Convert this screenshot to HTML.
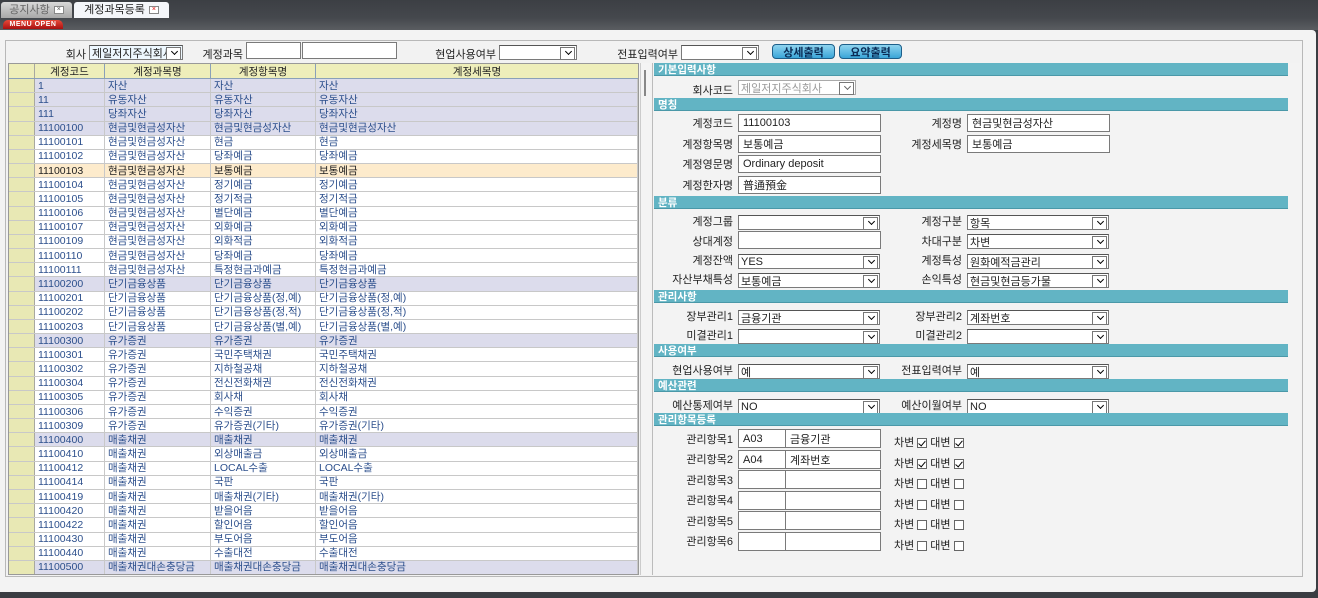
<!DOCTYPE html>
<html><head><meta charset="utf-8">
<style>
*{box-sizing:border-box;margin:0;padding:0}
body{width:1318px;height:598px;overflow:hidden;background:#3a3d42;font-family:"Liberation Sans","Noto Sans CJK KR","NanumGothic",sans-serif;font-size:11px;color:#222;position:relative}
.a{position:absolute}
.top{left:0;top:0;width:1318px;height:30px;background:linear-gradient(#3c3f44,#45484d 60%,#5a5d61)}
.tab{top:2px;height:16px;border-radius:3px 3px 0 0;font-size:11px;line-height:16px;text-align:center}
.x{display:inline-block;width:10px;height:8px;border:1px solid #888;background:#fff;font-size:7px;line-height:6px;vertical-align:middle;margin-left:4px;color:#555}
.menu{left:3px;top:20px;width:60px;height:9px;background:linear-gradient(#e84a3a,#a81010);border-radius:5px 5px 0 0;color:#fff;font-size:7px;font-weight:bold;line-height:9px;text-align:center;letter-spacing:.5px}
.main{left:0;top:30px;width:1316px;height:562px;background:#f3f3f3;border-radius:0 4px 4px 0}
.box{left:5px;top:40px;width:1298px;height:537px;border:1px solid #b8b8b8;background:#f2f2f2}
.inp{background:#fff;border:1px solid #7a7a7a;height:16px;font-size:11px;padding-left:4px;overflow:hidden;white-space:nowrap;display:flex;align-items:center}
.sel{background:#fff;border:1px solid #7a7a7a;border-top-color:#555;height:15px;font-size:11px;padding-left:2px;white-space:nowrap;display:flex;align-items:center}
.sel:after{content:"";position:absolute;right:1px;top:1px;width:13px;height:11px;border:1px solid #777;background:#fff}
.sel i{position:absolute;right:5px;top:3px;width:5px;height:5px;border-right:1.5px solid #000;border-bottom:1.5px solid #000;transform:rotate(45deg);z-index:2}
.lbl{font-size:11px;text-align:right;white-space:nowrap;color:#222}
.grid{left:8px;top:63px;width:631px;height:512px;border:1px solid #999;background:#fff;overflow:hidden}
.hd{position:absolute;left:0;top:0;height:15px;width:629px;background:#eeeeba;border-bottom:1px solid #8aa0b8;display:flex}
.hd div{border-right:1px solid #8aa0b8;display:flex;align-items:center;justify-content:center;font-size:10.5px}
.rows{position:absolute;left:0;top:15px;width:629px;height:495px;display:flex;flex-direction:column;overflow:hidden}
.r{flex:1 1 0;min-height:0;overflow:hidden;display:flex;border-bottom:1px solid #c8c8c8;color:#2c4f8c;font-size:10.5px;line-height:12px}
.r div{border-right:1px solid #c8c8c8;padding-left:3px;white-space:nowrap;overflow:hidden;display:flex;align-items:center}
.r div:first-child{background:#e8e8b4;border-right:1px solid #a8a8a0;padding:0}
.r.h{background:#dcdcec}
.r.s{background:#fdebcc;color:#222}
.c0{width:26px}.c1{width:70px}.c2{width:106px}.c3{width:105px}.c4{flex:1}
.bar{left:654px;width:634px;height:13px;background:#62b4c4;color:#fff;font-weight:bold;font-size:10.5px;padding-left:4px;border-bottom:1px solid #4a98a8;display:flex;align-items:center}
.cb{display:inline-block;width:10px;height:10px;border:1px solid #666;background:#fff;vertical-align:middle;position:relative;margin:0 3px}
.cb.k:after{content:"";position:absolute;left:2px;top:0px;width:3px;height:6px;border-right:1.5px solid #000;border-bottom:1.5px solid #000;transform:rotate(40deg)}
.btn{top:44px;height:15px;border:1px solid #1d5f8a;border-radius:4px;background:linear-gradient(#8fd4ef,#3aa5d8);color:#0a2b55;font-weight:bold;font-size:11px;display:flex;align-items:center;justify-content:center}
</style></head><body>
<div class="a top"></div>
<div class="a tab" style="left:1px;width:71px;background:linear-gradient(#d8d8d8,#a8a8a8);color:#666">공지사항<span class="x">×</span></div>
<div class="a tab" style="left:74px;width:95px;background:#f4f6fa;color:#222">계정과목등록<span class="x" style="color:#d00">×</span></div>
<div class="a menu">MENU OPEN</div>
<div class="a main"></div>
<div class="a box"></div>

<div class="a lbl" style="left:40px;top:46px;width:46px">회사</div>
<div class="a sel" style="left:89px;top:45px;width:94px;background:#eef8ff">제일저지주식회사<i></i></div>
<div class="a lbl" style="left:190px;top:46px;width:53px">계정과목</div>
<div class="a inp" style="left:246px;top:42px;width:55px;height:17px"></div>
<div class="a inp" style="left:302px;top:42px;width:95px;height:17px"></div>
<div class="a lbl" style="left:420px;top:46px;width:76px">현업사용여부</div>
<div class="a sel" style="left:499px;top:45px;width:78px"><i></i></div>
<div class="a lbl" style="left:600px;top:46px;width:78px">전표입력여부</div>
<div class="a sel" style="left:681px;top:45px;width:78px"><i></i></div>
<div class="a btn" style="left:772px;width:63px">상세출력</div>
<div class="a btn" style="left:839px;width:63px">요약출력</div>

<div class="a grid">
<div class="hd"><div class="c0" style="border-right-color:#a8a8a0"></div><div class="c1">계정코드</div><div class="c2">계정과목명</div><div class="c3">계정항목명</div><div class="c4" style="border:0">계정세목명</div></div>
<div class="rows">
<div class="r h"><div class="c0"></div><div class="c1">1</div><div class="c2">자산</div><div class="c3">자산</div><div class="c4">자산</div></div>
<div class="r h"><div class="c0"></div><div class="c1">11</div><div class="c2">유동자산</div><div class="c3">유동자산</div><div class="c4">유동자산</div></div>
<div class="r h"><div class="c0"></div><div class="c1">111</div><div class="c2">당좌자산</div><div class="c3">당좌자산</div><div class="c4">당좌자산</div></div>
<div class="r h"><div class="c0"></div><div class="c1">11100100</div><div class="c2">현금및현금성자산</div><div class="c3">현금및현금성자산</div><div class="c4">현금및현금성자산</div></div>
<div class="r"><div class="c0"></div><div class="c1">11100101</div><div class="c2">현금및현금성자산</div><div class="c3">현금</div><div class="c4">현금</div></div>
<div class="r"><div class="c0"></div><div class="c1">11100102</div><div class="c2">현금및현금성자산</div><div class="c3">당좌예금</div><div class="c4">당좌예금</div></div>
<div class="r s"><div class="c0"></div><div class="c1">11100103</div><div class="c2">현금및현금성자산</div><div class="c3">보통예금</div><div class="c4">보통예금</div></div>
<div class="r"><div class="c0"></div><div class="c1">11100104</div><div class="c2">현금및현금성자산</div><div class="c3">정기예금</div><div class="c4">정기예금</div></div>
<div class="r"><div class="c0"></div><div class="c1">11100105</div><div class="c2">현금및현금성자산</div><div class="c3">정기적금</div><div class="c4">정기적금</div></div>
<div class="r"><div class="c0"></div><div class="c1">11100106</div><div class="c2">현금및현금성자산</div><div class="c3">별단예금</div><div class="c4">별단예금</div></div>
<div class="r"><div class="c0"></div><div class="c1">11100107</div><div class="c2">현금및현금성자산</div><div class="c3">외화예금</div><div class="c4">외화예금</div></div>
<div class="r"><div class="c0"></div><div class="c1">11100109</div><div class="c2">현금및현금성자산</div><div class="c3">외화적금</div><div class="c4">외화적금</div></div>
<div class="r"><div class="c0"></div><div class="c1">11100110</div><div class="c2">현금및현금성자산</div><div class="c3">당좌예금</div><div class="c4">당좌예금</div></div>
<div class="r"><div class="c0"></div><div class="c1">11100111</div><div class="c2">현금및현금성자산</div><div class="c3">특정현금과예금</div><div class="c4">특정현금과예금</div></div>
<div class="r h"><div class="c0"></div><div class="c1">11100200</div><div class="c2">단기금융상품</div><div class="c3">단기금융상품</div><div class="c4">단기금융상품</div></div>
<div class="r"><div class="c0"></div><div class="c1">11100201</div><div class="c2">단기금융상품</div><div class="c3">단기금융상품(정,예)</div><div class="c4">단기금융상품(정,예)</div></div>
<div class="r"><div class="c0"></div><div class="c1">11100202</div><div class="c2">단기금융상품</div><div class="c3">단기금융상품(정,적)</div><div class="c4">단기금융상품(정,적)</div></div>
<div class="r"><div class="c0"></div><div class="c1">11100203</div><div class="c2">단기금융상품</div><div class="c3">단기금융상품(별,예)</div><div class="c4">단기금융상품(별,예)</div></div>
<div class="r h"><div class="c0"></div><div class="c1">11100300</div><div class="c2">유가증권</div><div class="c3">유가증권</div><div class="c4">유가증권</div></div>
<div class="r"><div class="c0"></div><div class="c1">11100301</div><div class="c2">유가증권</div><div class="c3">국민주택채권</div><div class="c4">국민주택채권</div></div>
<div class="r"><div class="c0"></div><div class="c1">11100302</div><div class="c2">유가증권</div><div class="c3">지하철공채</div><div class="c4">지하철공채</div></div>
<div class="r"><div class="c0"></div><div class="c1">11100304</div><div class="c2">유가증권</div><div class="c3">전신전화채권</div><div class="c4">전신전화채권</div></div>
<div class="r"><div class="c0"></div><div class="c1">11100305</div><div class="c2">유가증권</div><div class="c3">회사채</div><div class="c4">회사채</div></div>
<div class="r"><div class="c0"></div><div class="c1">11100306</div><div class="c2">유가증권</div><div class="c3">수익증권</div><div class="c4">수익증권</div></div>
<div class="r"><div class="c0"></div><div class="c1">11100309</div><div class="c2">유가증권</div><div class="c3">유가증권(기타)</div><div class="c4">유가증권(기타)</div></div>
<div class="r h"><div class="c0"></div><div class="c1">11100400</div><div class="c2">매출채권</div><div class="c3">매출채권</div><div class="c4">매출채권</div></div>
<div class="r"><div class="c0"></div><div class="c1">11100410</div><div class="c2">매출채권</div><div class="c3">외상매출금</div><div class="c4">외상매출금</div></div>
<div class="r"><div class="c0"></div><div class="c1">11100412</div><div class="c2">매출채권</div><div class="c3">LOCAL수출</div><div class="c4">LOCAL수출</div></div>
<div class="r"><div class="c0"></div><div class="c1">11100414</div><div class="c2">매출채권</div><div class="c3">국판</div><div class="c4">국판</div></div>
<div class="r"><div class="c0"></div><div class="c1">11100419</div><div class="c2">매출채권</div><div class="c3">매출채권(기타)</div><div class="c4">매출채권(기타)</div></div>
<div class="r"><div class="c0"></div><div class="c1">11100420</div><div class="c2">매출채권</div><div class="c3">받을어음</div><div class="c4">받을어음</div></div>
<div class="r"><div class="c0"></div><div class="c1">11100422</div><div class="c2">매출채권</div><div class="c3">할인어음</div><div class="c4">할인어음</div></div>
<div class="r"><div class="c0"></div><div class="c1">11100430</div><div class="c2">매출채권</div><div class="c3">부도어음</div><div class="c4">부도어음</div></div>
<div class="r"><div class="c0"></div><div class="c1">11100440</div><div class="c2">매출채권</div><div class="c3">수출대전</div><div class="c4">수출대전</div></div>
<div class="r h" style="border-bottom:0"><div class="c0"></div><div class="c1">11100500</div><div class="c2">매출채권대손충당금</div><div class="c3">매출채권대손충당금</div><div class="c4">매출채권대손충당금</div></div>
</div>
</div>
<div class="a" style="left:640px;top:63px;width:10px;height:512px;background:#f4f4f4;border-left:1px solid #ccc"></div>
<div class="a" style="left:644px;top:70px;width:2px;height:26px;background:#888"></div>
<div class="a" style="left:652px;top:63px;width:648px;height:512px;border-left:1px solid #bbb;background:#f3f3f3"></div>

<div class="a bar" style="top:63px">기본입력사항</div>
<div class="a lbl" style="left:660px;top:82px;width:73px">회사코드</div>
<div class="a sel" style="left:738px;top:80px;width:118px;color:#999;border-color:#aaa">제일저지주식회사<i style="border-color:#666"></i></div>

<div class="a bar" style="top:98px">명칭</div>
<div class="a lbl" style="left:660px;top:115px;width:73px">계정코드</div>
<div class="a inp" style="left:738px;top:114px;width:143px;height:18px">11100103</div>
<div class="a lbl" style="left:890px;top:115px;width:72px">계정명</div>
<div class="a inp" style="left:967px;top:114px;width:143px;height:18px">현금및현금성자산</div>
<div class="a lbl" style="left:660px;top:136px;width:73px">계정항목명</div>
<div class="a inp" style="left:738px;top:135px;width:143px;height:18px">보통예금</div>
<div class="a lbl" style="left:890px;top:136px;width:72px">계정세목명</div>
<div class="a inp" style="left:967px;top:135px;width:143px;height:18px">보통예금</div>
<div class="a lbl" style="left:660px;top:156px;width:73px">계정영문명</div>
<div class="a inp" style="left:738px;top:155px;width:143px;height:18px">Ordinary deposit</div>
<div class="a lbl" style="left:660px;top:177px;width:73px">계정한자명</div>
<div class="a inp" style="left:738px;top:176px;width:143px;height:18px">普通預金</div>

<div class="a bar" style="top:196px">분류</div>
<div class="a lbl" style="left:660px;top:213px;width:73px">계정그룹</div>
<div class="a sel" style="left:738px;top:215px;width:142px"><i></i></div>
<div class="a lbl" style="left:890px;top:213px;width:72px">계정구분</div>
<div class="a sel" style="left:967px;top:215px;width:142px">항목<i></i></div>
<div class="a lbl" style="left:660px;top:233px;width:73px">상대계정</div>
<div class="a inp" style="left:738px;top:231px;width:143px;height:18px"></div>
<div class="a lbl" style="left:890px;top:233px;width:72px">차대구분</div>
<div class="a sel" style="left:967px;top:234px;width:142px">차변<i></i></div>
<div class="a lbl" style="left:660px;top:252px;width:73px">계정잔액</div>
<div class="a sel" style="left:738px;top:254px;width:142px">YES<i></i></div>
<div class="a lbl" style="left:890px;top:252px;width:72px">계정특성</div>
<div class="a sel" style="left:967px;top:254px;width:142px">원화예적금관리<i></i></div>
<div class="a lbl" style="left:660px;top:271px;width:73px">자산부채특성</div>
<div class="a sel" style="left:738px;top:273px;width:142px">보통예금<i></i></div>
<div class="a lbl" style="left:890px;top:271px;width:72px">손익특성</div>
<div class="a sel" style="left:967px;top:273px;width:142px">현금및현금등가물<i></i></div>

<div class="a bar" style="top:290px">관리사항</div>
<div class="a lbl" style="left:660px;top:308px;width:73px">장부관리1</div>
<div class="a sel" style="left:738px;top:310px;width:142px">금융기관<i></i></div>
<div class="a lbl" style="left:890px;top:308px;width:72px">장부관리2</div>
<div class="a sel" style="left:967px;top:310px;width:142px">계좌번호<i></i></div>
<div class="a lbl" style="left:660px;top:327px;width:73px">미결관리1</div>
<div class="a sel" style="left:738px;top:329px;width:142px"><i></i></div>
<div class="a lbl" style="left:890px;top:327px;width:72px">미결관리2</div>
<div class="a sel" style="left:967px;top:329px;width:142px"><i></i></div>

<div class="a bar" style="top:344px">사용여부</div>
<div class="a lbl" style="left:660px;top:362px;width:73px">현업사용여부</div>
<div class="a sel" style="left:738px;top:364px;width:142px">예<i></i></div>
<div class="a lbl" style="left:890px;top:362px;width:72px">전표입력여부</div>
<div class="a sel" style="left:967px;top:364px;width:142px">예<i></i></div>

<div class="a bar" style="top:379px">예산관련</div>
<div class="a lbl" style="left:660px;top:397px;width:73px">예산통제여부</div>
<div class="a sel" style="left:738px;top:399px;width:142px">NO<i></i></div>
<div class="a lbl" style="left:890px;top:397px;width:72px">예산이월여부</div>
<div class="a sel" style="left:967px;top:399px;width:142px">NO<i></i></div>

<div class="a bar" style="top:413px">관리항목등록</div>
<div class="a lbl" style="left:660px;top:431px;width:73px">관리항목1</div>
<div class="a inp" style="left:738px;top:429px;width:48px;height:19px">A03</div>
<div class="a inp" style="left:785px;top:429px;width:96px;height:19px">금융기관</div>
<div class="a" style="left:894px;top:434px">차변<span class="cb k"></span>대변<span class="cb k"></span></div>
<div class="a lbl" style="left:660px;top:451px;width:73px">관리항목2</div>
<div class="a inp" style="left:738px;top:450px;width:48px;height:19px">A04</div>
<div class="a inp" style="left:785px;top:450px;width:96px;height:19px">계좌번호</div>
<div class="a" style="left:894px;top:455px">차변<span class="cb k"></span>대변<span class="cb k"></span></div>
<div class="a lbl" style="left:660px;top:472px;width:73px">관리항목3</div>
<div class="a inp" style="left:738px;top:470px;width:48px;height:19px"></div>
<div class="a inp" style="left:785px;top:470px;width:96px;height:19px"></div>
<div class="a" style="left:894px;top:475px">차변<span class="cb"></span>대변<span class="cb"></span></div>
<div class="a lbl" style="left:660px;top:492px;width:73px">관리항목4</div>
<div class="a inp" style="left:738px;top:491px;width:48px;height:19px"></div>
<div class="a inp" style="left:785px;top:491px;width:96px;height:19px"></div>
<div class="a" style="left:894px;top:496px">차변<span class="cb"></span>대변<span class="cb"></span></div>
<div class="a lbl" style="left:660px;top:513px;width:73px">관리항목5</div>
<div class="a inp" style="left:738px;top:511px;width:48px;height:19px"></div>
<div class="a inp" style="left:785px;top:511px;width:96px;height:19px"></div>
<div class="a" style="left:894px;top:516px">차변<span class="cb"></span>대변<span class="cb"></span></div>
<div class="a lbl" style="left:660px;top:533px;width:73px">관리항목6</div>
<div class="a inp" style="left:738px;top:532px;width:48px;height:19px"></div>
<div class="a inp" style="left:785px;top:532px;width:96px;height:19px"></div>
<div class="a" style="left:894px;top:537px">차변<span class="cb"></span>대변<span class="cb"></span></div>
</body></html>
